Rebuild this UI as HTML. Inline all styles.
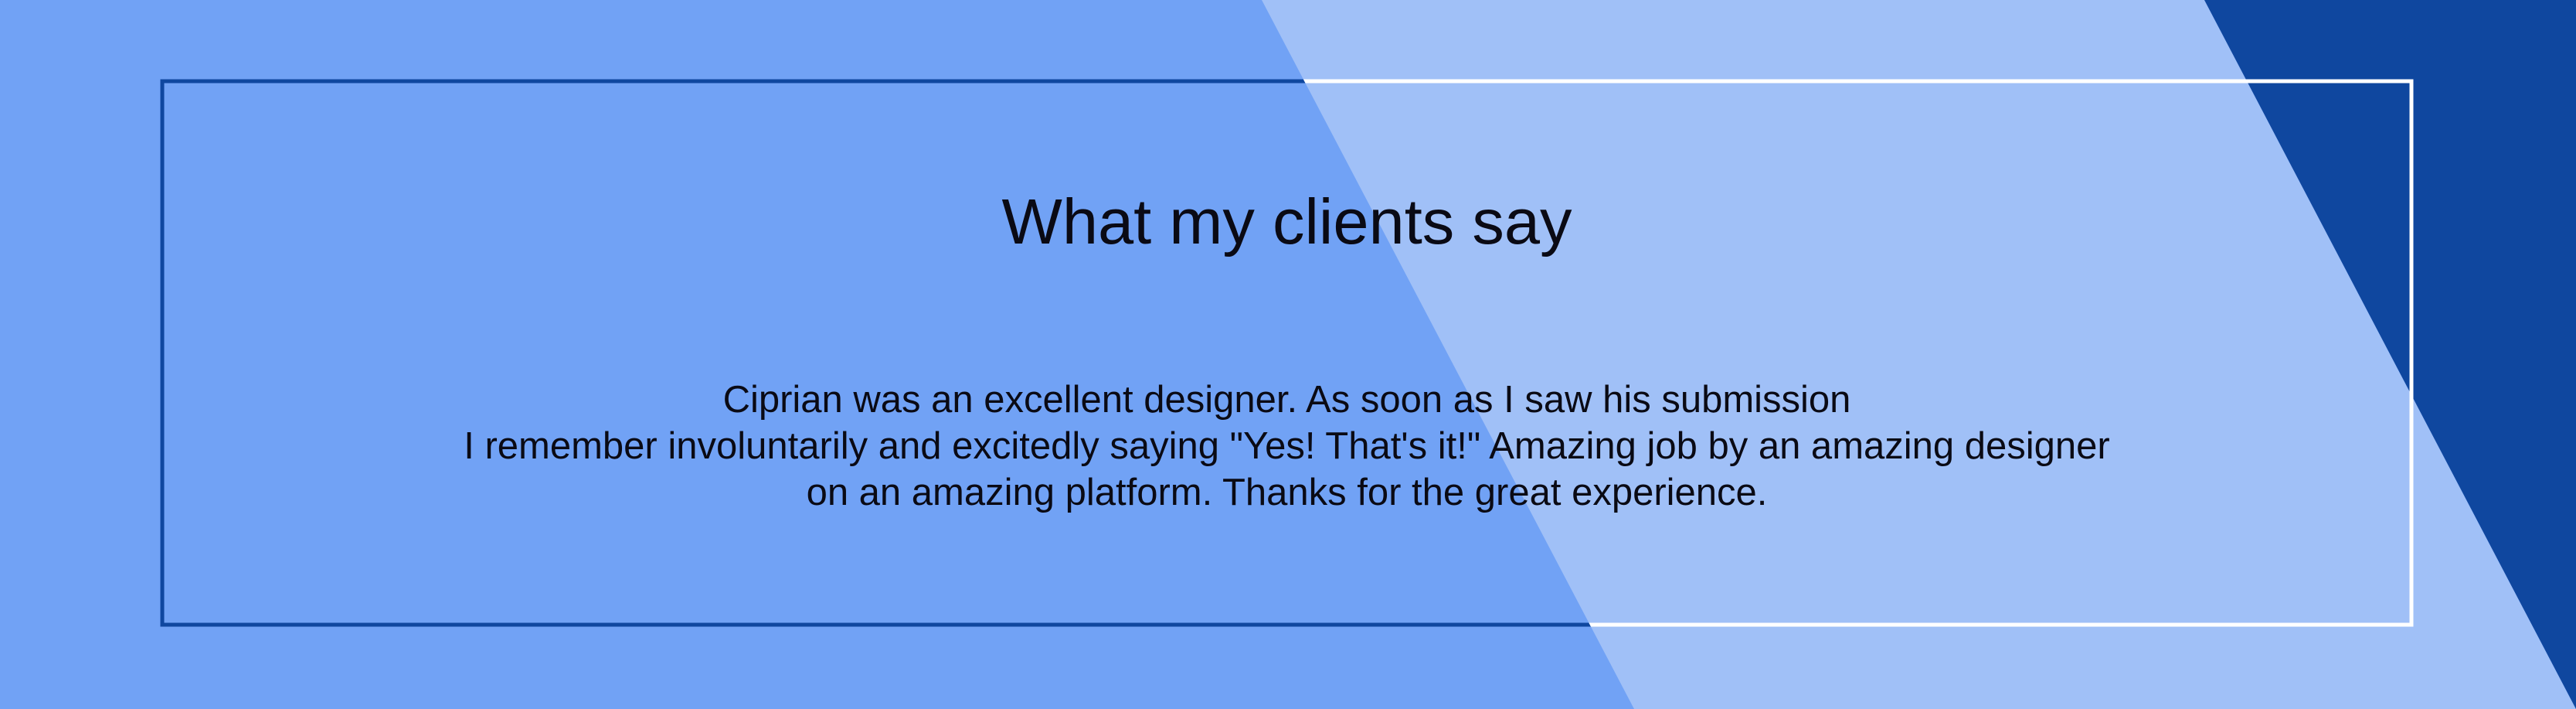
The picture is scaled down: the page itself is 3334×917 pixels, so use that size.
<!DOCTYPE html>
<html><head><meta charset="utf-8"><style>
html,body{margin:0;padding:0}
body{width:3334px;height:917px;position:relative;overflow:hidden;background:#71a2f5;font-family:"Liberation Sans",sans-serif;color:#0a0a14}
svg{position:absolute;left:0;top:0}
h1{position:absolute;left:210px;width:2911px;top:232px;margin:0;text-align:center;font-weight:normal;font-size:83px;line-height:110px}
p{position:absolute;left:210px;width:2911px;top:487px;margin:0;text-align:center;font-size:49px;line-height:60px}
</style></head><body>
<svg width="3334" height="917" viewBox="0 0 3334 917">
<defs>
<clipPath id="light"><polygon points="1633,0 3334,0 3334,917 2115,917"/></clipPath>
<clipPath id="dark"><polygon points="0,0 1633,0 2115,917 0,917"/></clipPath>
</defs>
<polygon points="1633,0 2853,0 3334,917 2115,917" fill="#a0c0f7"/>
<polygon points="2853,0 3334,0 3334,917" fill="#0f479f"/>
<rect x="210" y="105" width="2911" height="703" fill="none" stroke="#0f479f" stroke-width="5" clip-path="url(#dark)"/>
<rect x="210" y="105" width="2911" height="703" fill="none" stroke="#ffffff" stroke-width="5" clip-path="url(#light)"/>
</svg>
<h1>What my clients say</h1>
<p>Ciprian was an excellent designer. As soon as I saw his submission<br>I remember involuntarily and excitedly saying "Yes! That's it!" Amazing job by an amazing designer<br>on an amazing platform. Thanks for the great experience.</p>
</body></html>
